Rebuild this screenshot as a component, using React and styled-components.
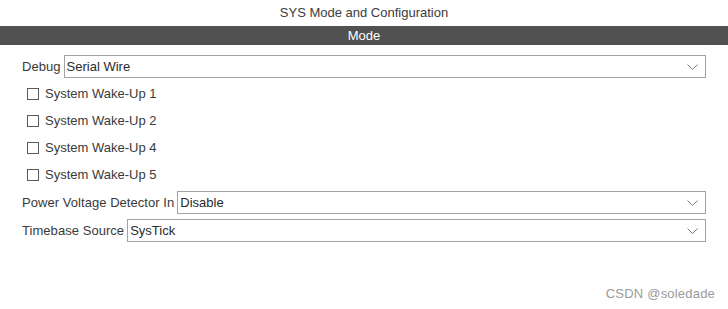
import React from 'react';
import styled, { createGlobalStyle } from 'styled-components';

const Global = createGlobalStyle`
  html, body {
    margin: 0;
    padding: 0;
    background: #ffffff;
  }
  body {
    font-family: "Liberation Sans", Arial, sans-serif;
    font-size: 13px;
    color: #3a3a3a;
  }
`;

const Page = styled.div`
  position: relative;
  width: 728px;
  height: 309px;
  overflow: hidden;
`;

const Title = styled.div`
  height: 25px;
  line-height: 25px;
  text-align: center;
  color: #3c3c3c;
`;

const Bar = styled.div`
  height: 19px;
  line-height: 19px;
  background: #505150;
  color: #ffffff;
  text-align: center;
  margin-top: 1px;
`;

const Content = styled.div`
  padding: 10px 22px 0 22px;
`;

const FieldRow = styled.div`
  display: flex;
  align-items: center;
  height: 23px;
  margin-top: ${p => p.$gap || 0}px;
`;

const Label = styled.span`
  white-space: nowrap;
  margin-right: 3px;
  letter-spacing: 0.05px;
  color: #3a3a3a;
`;

const Select = styled.div`
  flex: 1;
  height: 23px;
  box-sizing: border-box;
  border: 1px solid #a3a3a3;
  display: flex;
  align-items: center;
  justify-content: space-between;
  padding: 0 7px 0 2px;
  color: #2a2a2a;
`;

const Chevron = () => (
  <svg width="11" height="6" viewBox="0 0 11 6">
    <polyline points="0.5,0.5 5.5,5.5 10.5,0.5" fill="none" stroke="#7a7a7a" strokeWidth="1" />
  </svg>
);

const CheckRow = styled.div`
  display: flex;
  align-items: center;
  height: 27px;
  padding-left: 5px;
`;

const Box = styled.span`
  width: 12px;
  height: 12px;
  box-sizing: border-box;
  border: 1px solid #5a5a5a;
  background: #fff;
  margin-right: 6px;
`;

const Watermark = styled.div`
  position: absolute;
  right: 13px;
  top: 286px;
  font-size: 13px;
  letter-spacing: 0.2px;
  color: #9a9a9a;
`;

function Field({ label, value, gap }) {
  return (
    <FieldRow $gap={gap}>
      <Label>{label}</Label>
      <Select>
        <span>{value}</span>
        <Chevron />
      </Select>
    </FieldRow>
  );
}

export default function App() {
  const wakeUps = [1, 2, 4, 5];
  return (
    <Page>
      <Global />
      <Title>SYS Mode and Configuration</Title>
      <Bar>Mode</Bar>
      <Content>
        <Field label="Debug" value="Serial Wire" />
        <div style={{ height: 2 }} />
        {wakeUps.map(n => (
          <CheckRow key={n}>
            <Box />
            <span>System Wake-Up {n}</span>
          </CheckRow>
        ))}
        <Field label="Power Voltage Detector In" value="Disable" gap={3} />
        <Field label="Timebase Source" value="SysTick" gap={5} />
      </Content>
      <Watermark>CSDN @soledade</Watermark>
    </Page>
  );
}
